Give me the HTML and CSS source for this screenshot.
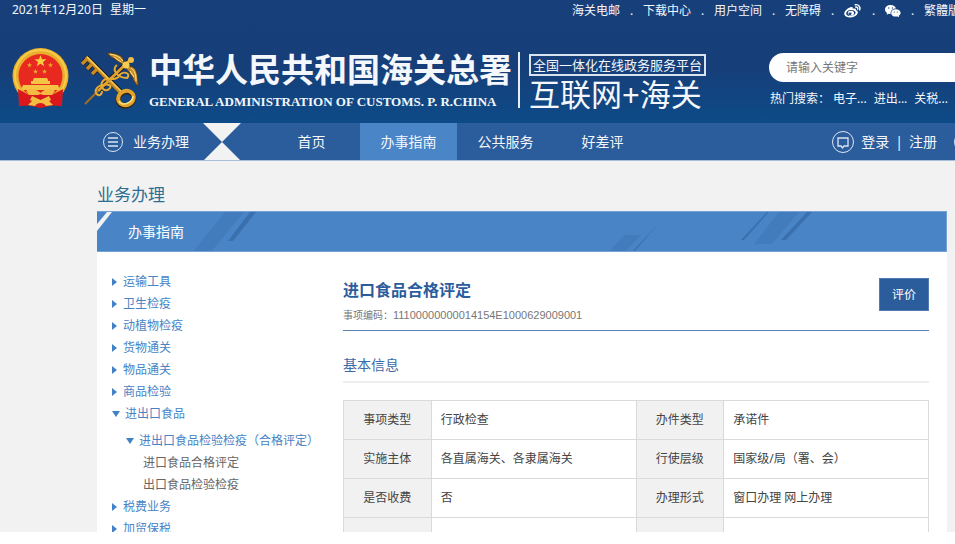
FILE: index.html
```html
<!DOCTYPE html>
<html lang="zh-CN">
<head>
<meta charset="utf-8">
<title>办事指南 - 中华人民共和国海关总署</title>
<link rel="stylesheet" href="styles.css">
</head>
<body>
<div class="page">
  <header class="header">
    <div class="topbar">
      <p class="date"><span>2021年12月20日</span><span>星期一</span></p>
      <nav class="toplinks">
        <a href="#">海关电邮</a><i>.</i>
        <a href="#">下载中心</a><i>.</i>
        <a href="#">用户空间</a><i>.</i>
        <a href="#">无障碍</a><i>.</i>
        <a href="#" aria-label="微博"><svg width="18" height="16" viewBox="0 0 17 14"><path fill="#fff" fill-rule="evenodd" d="M6 3.5C7.5 2.8 8.600 3.300 8.300 4.900C10 4.200 11.600 4.500 11.300 6.200C13.300 6.800 13.600 8.600 12.300 10.300C9.500 14 1.500 14 .300 10.300C-.300 7.800 3 4.500 6 3.500ZM6.300 6C3.700 6.200 1.900 7.700 2.100 9.500C2.400 11.200 4.400 12 6.900 11.700C9.400 11.400 11.100 9.800 10.900 8.200C10.600 6.700 8.700 5.800 6.300 6Z"/><path fill="#fff" fill-rule="evenodd" d="M6.500 6.900A2.300 2.300 0 1 0 6.600 11.300A2.300 2.300 0 1 0 6.500 6.900ZM5.700 8.700A1 1 0 1 1 5.600 10.500A1 1 0 1 1 5.700 8.700Z"/><path fill="none" stroke="#fff" stroke-width="1.300" stroke-linecap="round" d="M10.600 1.100C13.700.500 15.800 3.200 14.800 6M11 3.200C12.500 3 13.300 4.100 12.900 5.300"/></svg></a><i>.</i>
        <a href="#" aria-label="微信"><svg width="16" height="14" viewBox="0 0 16 14"><path fill="#fff" d="M5.700 1C2.400 1 0 3 0 5.500C0 7 .800 8.200 2.100 9L1.600 10.800L3.700 9.700C4.400 9.900 5 10 5.700 10C5 7 7.500 4.500 10.900 4.500C10.500 2.400 8.300 1 5.700 1Z"/><path fill="#fff" d="M10.800 5.200C8.100 5.200 6.200 6.900 6.200 8.900C6.200 11 8.100 12.600 10.800 12.600L12.400 12.400L14.100 13.300L13.700 11.800C14.900 11.100 15.600 10 15.600 8.900C15.600 6.900 13.500 5.200 10.800 5.200Z"/><g fill="#245087"><circle cx="3.800" cy="4" r=".7"/><circle cx="7.400" cy="4" r=".7"/><circle cx="9.300" cy="8" r=".6"/><circle cx="12.300" cy="8" r=".6"/></g></svg></a><i>.</i>
        <a href="#">繁體版</a>
      </nav>
    </div>
    <div class="masthead">
      <svg class="emblem" width="57" height="60" viewBox="0 0 57 60">
        <path fill="#d9171c" d="M8 40L7 58L19 57L28 60L38 57L50 58L49 40Z"/>
        <ellipse cx="28.500" cy="28" rx="28" ry="28" fill="#e9ae2c"/>
        <ellipse cx="28.500" cy="27.500" rx="25.500" ry="25.500" fill="none" stroke="#f7cc49" stroke-width="2"/>
        <circle cx="28.500" cy="28" r="22" fill="#e72920"/>
        <path fill="#f7cc3f" d="M28.500 7L30 11.200L34.500 11.300L31 14L32.200 18.200L28.500 15.700L24.800 18.200L26 14L22.500 11.300L27 11.200Z"/>
        <path id="star" fill="#e9a52d" d="M17.500 14.500L18.200 16.200L20 16.300L18.600 17.500L19 19.300L17.500 18.300L16 19.300L16.400 17.500L15 16.300L16.800 16.200Z"/>
        <use href="#star" x="21"/><use href="#star" x="6" y="6.500"/><use href="#star" x="15" y="6.500"/>
        <path fill="#f6c445" d="M21 32L22 30H35L36 32V33H38V36H19V33H21ZM11 37H46L48 42H9Z"/>
        <path fill="#f4b943" d="M14 43C20 39 25 42 28.500 45C32 42 37 39 43 43L39 48H34L28.500 46L23 48H18Z"/>
        <path fill="#d9171c" d="M6 41L17 47L20 57L7 58ZM51 41L40 47L37 57L50 58Z"/>
        <path fill="#d9171c" d="M16 47H41L42 57L28.500 60L15 57Z"/>
        <path fill="#f4bd42" d="M20 48L28.500 52L37 48L39 52L37 53L41 57L34 58C32 54 25 54 23 58L16 57L20 53L18 52Z"/>
      </svg>
      <svg class="keys" width="58" height="57" viewBox="0 0 58 57">
        <g fill="none" stroke-linejoin="round">
          <path stroke="#221d20" stroke-width="5" d="M5 5L40 40M6 7L1 12M11 12L6 17M16 17L11 22M48 9L17 39"/>
          <path stroke="#c98a24" stroke-width="3.500" d="M5 5L39 40M6 7L1 12M11 12L6 17M16 17L11 22"/>
          <path stroke="#f8d45c" stroke-width="1.500" d="M6 5L40 39"/>
          <path stroke="#de9d2c" stroke-width="3" d="M48 9L17 39"/>
          <path stroke="#a66c27" stroke-width="2" d="M17 39L4 52"/>
          <path stroke="#e7ab35" stroke-width="2" d="M36 13C30 17 36 26 46 26C51 21 41 18 38 24C34 31 26 23 22 29C17 35 25 42 29 36C32 31 19 32 16 36C11 42 21 47 21 39"/>
          <ellipse cx="45" cy="47" rx="8" ry="7" stroke="#33230d" stroke-width="5" transform="rotate(-25 45 47)"/>
          <ellipse cx="45" cy="46" rx="8" ry="7" stroke="#e3a42e" stroke-width="4" transform="rotate(-25 45 46)"/>
          <path stroke="#ffe37a" stroke-width="1.500" d="M38 49C40 55 52 51 52 44"/>
        </g>
        <path fill="#c88d2b" stroke="#553b17" d="M43 10C42 3 35 1 26 1C30 6 34 6 36 9C39 10 41 12 44 14ZM48 14C56 15 57 22 57 34C52 30 53 25 49 22C48 19 46 18 45 16Z"/>
        <path fill="none" stroke="#ffe38a" d="M29 2C35 3 39 5 42 9M50 16C54 18 55 24 55 29M33 5L40 10M49 19L53 25"/>
        <circle cx="50" cy="8" r="3" fill="#f1bf47"/><circle cx="45" cy="13" r="3.500" fill="#f7cc55"/>
      </svg>
      <div class="brand">
        <h1>中华人民共和国海关总署</h1>
        <p>GENERAL ADMINISTRATION OF CUSTOMS. P. R.CHINA</p>
      </div>
      <div class="platform">
        <span class="platform-tag">全国一体化在线政务服务平台</span>
        <span class="platform-name">互联网+海关</span>
      </div>
      <form class="search">
        <input type="search" aria-label="搜索" placeholder="请输入关键字">
        <p class="hot"><span>热门搜索：</span><a href="#">电子...</a><a href="#">进出...</a><a href="#">关税...</a></p>
      </form>
    </div>
  </header>

  <nav class="mainnav">
    <a class="services" href="#"><svg width="22" height="22" viewBox="0 0 22 22" fill="none" stroke="#dce6f2"><circle cx="11" cy="11" r="9.500"/><path stroke-width="1.400" d="M6 7H16M6 11H16M6 15H16"/></svg>业务办理</a>
    <svg class="notch" width="38" height="38" viewBox="0 0 38 38"><path fill="#f2f2f2" d="M0 0H38L19 19ZM19 19L38 38H0Z"/></svg>
    <div class="tabs">
      <a href="#">首页</a><a class="active" href="#">办事指南</a><a href="#">公共服务</a><a href="#">好差评</a>
    </div>
    <div class="account">
      <svg width="24" height="24" viewBox="0 0 24 24" fill="none" stroke="#dce6f2"><circle cx="12" cy="12" r="10.500"/><path stroke-width="1.300" d="M7 8H17V16H13L11.500 18L10 16H7Z"/></svg>
      <a href="#">登录</a><span>|</span><a href="#">注册</a>
      <svg class="more" width="24" height="24" viewBox="0 0 24 24" fill="none" stroke="#dce6f2"><circle cx="12" cy="12" r="10.500"/></svg>
    </div>
  </nav>

  <main class="main">
    <h2 class="section">业务办理</h2>
    <div class="banner">
      <svg class="stripes" width="850" height="40" viewBox="0 0 850 40">
        <path fill="#f2f2f2" d="M10 0H15L0 19V12Z"/>
        <path fill="#427cbc" d="M128 0H147L114 40H96ZM527 23H544L528 40H512ZM682 0H702L675 32H657Z"/>
        <path fill="#3a70ad" d="M153 0H159L136 29H131ZM562 11L537 40H535ZM670 0H672L647 28H644ZM710 0H715L689 28H684Z"/>
      </svg>
      <h3>办事指南</h3>
    </div>
    <div class="panel">
      <ul class="tree">
        <li><a href="#">运输工具</a></li>
        <li><a href="#">卫生检疫</a></li>
        <li><a href="#">动植物检疫</a></li>
        <li><a href="#">货物通关</a></li>
        <li><a href="#">物品通关</a></li>
        <li><a href="#">商品检验</a></li>
        <li><a class="open" href="#">进出口食品</a>
          <ul class="branch">
            <li><a class="open" href="#">进出口食品检验检疫（合格评定）</a>
              <ul class="leaves">
                <li><a href="#">进口食品合格评定</a></li>
                <li><a href="#">出口食品检验检疫</a></li>
              </ul>
            </li>
          </ul>
        </li>
        <li><a href="#">税费业务</a></li>
        <li><a href="#">加贸保税</a></li>
      </ul>
      <article class="detail">
        <div class="detail-head">
          <div>
            <h2>进口食品合格评定</h2>
            <p class="code">事项编码：<span>11100000000014154E1000629009001</span></p>
          </div>
          <button type="button">评价</button>
        </div>
        <h3>基本信息</h3>
        <table>
          <tr><th scope="row">事项类型</th><td>行政检查</td><th scope="row">办件类型</th><td>承诺件</td></tr>
          <tr><th scope="row">实施主体</th><td>各直属海关、各隶属海关</td><th scope="row">行使层级</th><td>国家级/局（署、会）</td></tr>
          <tr><th scope="row">是否收费</th><td>否</td><th scope="row">办理形式</th><td>窗口办理 网上办理</td></tr>
          <tr><th scope="row"></th><td></td><th scope="row"></th><td></td></tr>
        </table>
      </article>
    </div>
  </main>
</div>
</body>
</html>
```
FILE: styles.css
```css
* { box-sizing: border-box; margin: 0; padding: 0; }
body {
  height: 100vh;
  padding-bottom: 12px;
  overflow: hidden;
  background: #fff;
  color: #444;
  font: 12px/20px "Noto Sans", "Noto Sans CJK SC", sans-serif;
}
a { color: inherit; text-decoration: none; }
ul { list-style: none; }
svg { display: block; flex: none; }
.page { height: 100%; overflow: hidden; background: #f2f2f2; }

/* Header */
.header {
  height: 123px;
  color: #f4f7fb;
  background: linear-gradient(#173f7a 0%, #163f79 55%, #0d4b88 100%);
}
.topbar {
  display: flex;
  justify-content: space-between;
  height: 48px;
  padding-left: 12px;
  white-space: nowrap;
}
.date { display: flex; gap: 7px; }
.toplinks {
  display: flex;
  gap: 10px;
  height: 22px;
  align-items: center;
  margin-right: -5px;
}
.toplinks i { width: 3px; font-style: normal; }
.masthead { display: flex; padding-left: 12px; white-space: nowrap; }
.keys { margin: 4px 0 0 12px; }
.brand {
  margin: 4px 0 0 10px;
  padding-right: 6px;
  border-right: 2px solid #e8eef6;
  height: 56px;
}
.brand h1 { font: bold 33px/32px "Noto Sans CJK SC", sans-serif; }
.brand p { padding-top: 10px; font: bold 13px/16px "Liberation Serif", serif; }
.platform { margin: 6px 0 0 9px; }
.platform-tag {
  display: block;
  padding: 0 2px;
  border: 2px solid #d9e3f0;
  font-size: 13px;
  line-height: 18px;
}
.platform-name { display: block; font-size: 31px; line-height: 36px; }
.search { flex: 1; margin: 5px 0 0 63px; }
.search input {
  display: block;
  width: 100%;
  height: 29px;
  padding-left: 17px;
  border: 0;
  border-radius: 15px 0 0 15px;
  background: #fff;
  font: inherit;
}
.search input::placeholder { color: #777; }
.hot { display: flex; gap: 7px; padding: 7px 0 0 1px; }
.hot span { margin-right: -4px; }

/* Main navigation */
.mainnav {
  display: flex;
  height: 38px;
  line-height: 38px;
  border-bottom: 1px solid #aabfda;
  background: #2b5c9b;
  color: #f4f7fb;
  font-size: 14px;
  white-space: nowrap;
  overflow: hidden;
}
.services { display: flex; align-items: center; gap: 9px; width: 203px; padding-left: 102px; }
.tabs { display: flex; margin-left: 22px; }
.tabs a { width: 97px; text-align: center; }
.tabs .active { background: #4985c7; }
.account { display: flex; align-items: center; margin-left: auto; margin-right: -22px; }
.account a { margin-left: 6px; }
.account span { margin-left: 6px; }
.account .more { margin-left: 16px; }

/* Page body */
.main { padding: 24px 8px 0 97px; }
.section { color: #2e6e93; font-size: 17px; font-weight: 400; line-height: 20px; }
.banner {
  position: relative;
  height: 41px;
  margin-top: 6px;
  overflow: hidden;
  background: #4985c6;
  border: 1px solid #75a2d5;
  border-left: 0;
}
.stripes { position: absolute; left: 0; top: 0; }
.banner h3 {
  position: relative;
  padding-left: 31px;
  color: #fff;
  font-size: 14px;
  font-weight: 400;
  line-height: 40px;
}
.panel { display: flex; padding: 18px 18px 20px 15px; background: #fff; }

/* Category tree */
.tree {
  flex: none;
  width: 231px;
  padding-top: 1px;
  color: #4783c5;
  line-height: 22px;
  white-space: nowrap;
}
.tree a { display: flex; align-items: center; gap: 6px; }
.tree a::before {
  content: "";
  border: 4px solid transparent;
  border-left: 5px solid #4381c5;
  border-right: 0;
}
.tree a.open { gap: 5px; }
.tree a.open::before {
  border: 4px solid transparent;
  border-top: 6px solid #4381c5;
  border-bottom: 0;
}
.branch { padding: 5px 0 0 14px; }
.leaves { padding-left: 17px; color: #666; }
.leaves a::before { display: none; }

/* Item detail */
.detail { flex: 1; }
.detail-head {
  display: flex;
  justify-content: space-between;
  height: 61px;
  padding-top: 8px;
  border-bottom: 1px solid #5d82b5;
}
.detail h2 { color: #2b5c9b; font-size: 16px; line-height: 24px; }
.code { color: #777; font-size: 10px; line-height: 26px; }
.code span { font: 11px "Liberation Sans", sans-serif; }
.detail button {
  width: 50px;
  height: 33px;
  border: 1px solid #507ab0;
  background: #2b5c9b;
  color: #fff;
  font: inherit;
}
.detail h3 {
  margin: 20px 0 17px;
  padding: 4px 0 6px;
  border-bottom: 2px solid #eee;
  color: #3b6ba8;
  font-size: 14px;
  font-weight: 400;
  line-height: 20px;
}
.detail table { width: 100%; border-collapse: collapse; table-layout: fixed; }
.detail tr { height: 39px; }
.detail th, .detail td { border: 1px solid #dadada; font-weight: 400; }
.detail th { width: 15%; background: #f1f1f1; text-align: center; }
.detail td { width: 35%; padding-left: 9px; }
```
